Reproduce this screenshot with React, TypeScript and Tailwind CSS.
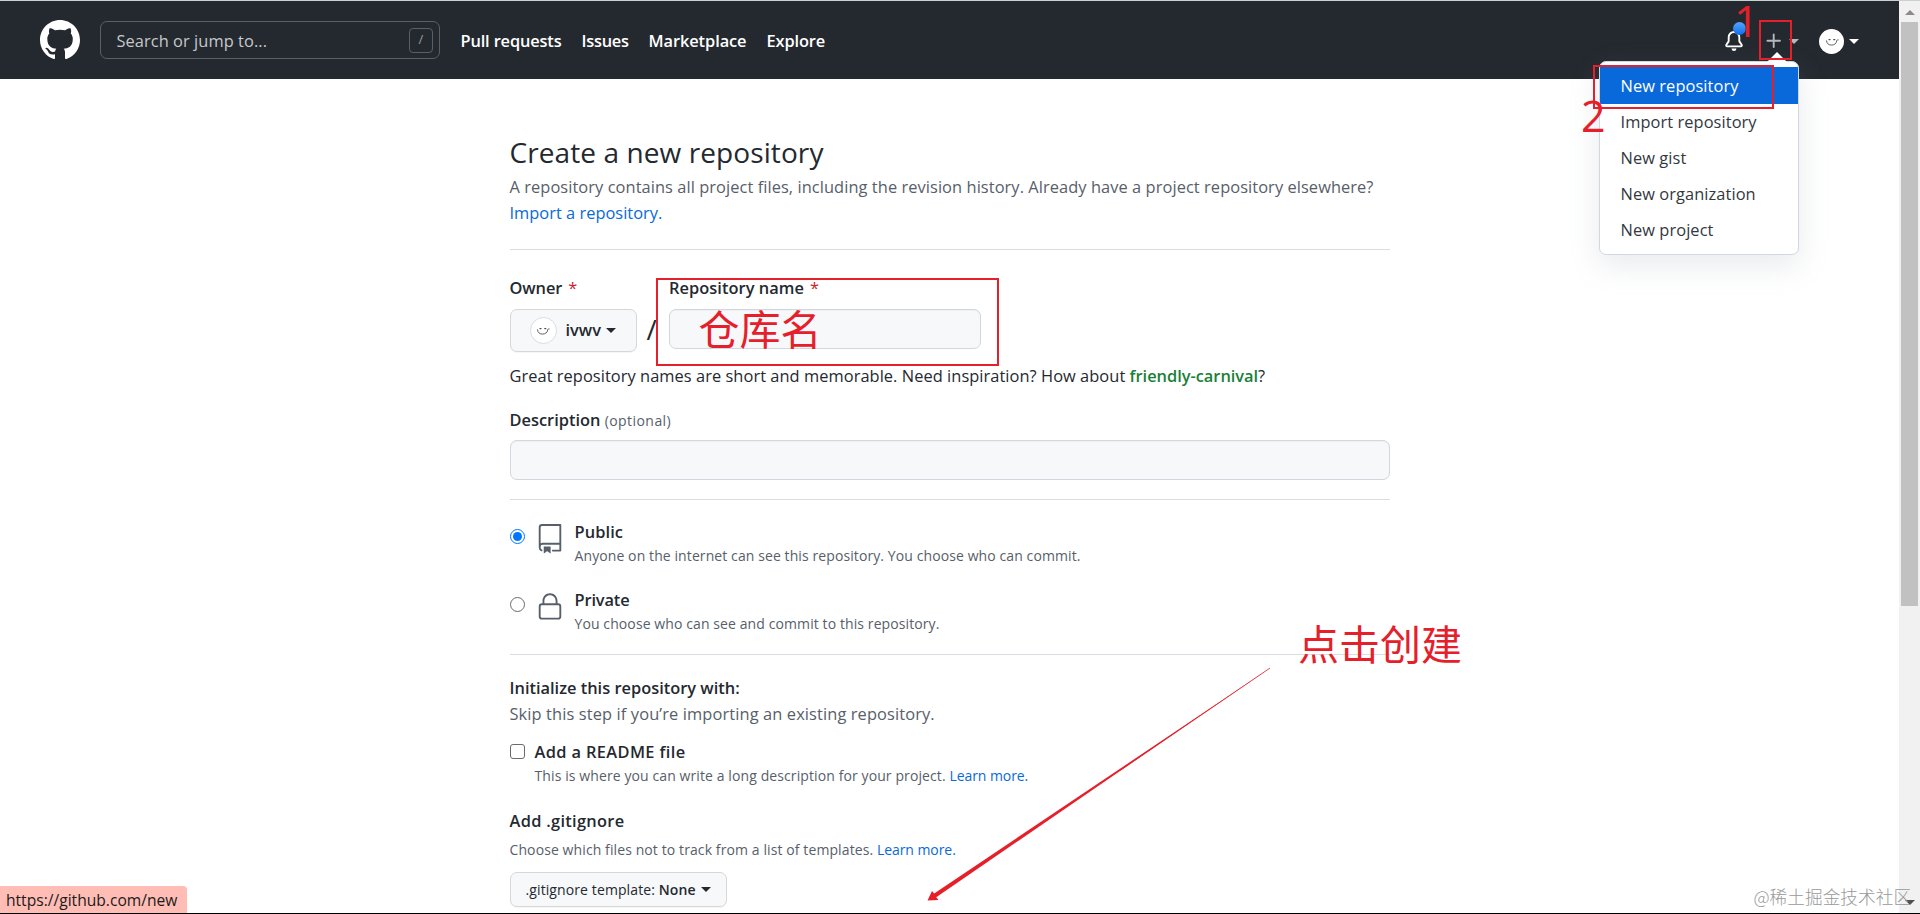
import clsx from "clsx";

const navItems = [
  { label: "Pull requests", className: "w-[101px] tracking-[-0.147px]" },
  { label: "Issues", className: "w-[47px] tracking-[-0.25px]" },
  { label: "Marketplace", className: "w-[98px] tracking-[-0.08px]" },
  { label: "Explore", className: "w-[59px] tracking-[-0.14px]" },
];

const menuItems = [
  "New repository",
  "Import repository",
  "New gist",
  "New organization",
  "New project",
];

function Caret({ className }: { className?: string }) {
  return (
    <span
      className={clsx(
        "block h-0 w-0 border-x-[5px] border-t-[5px] border-x-transparent",
        className
      )}
    />
  );
}

function GitHubMark() {
  return (
    <svg width="40" height="40" viewBox="0 0 16 16" fill="white">
      <path
        fillRule="evenodd"
        d="M8 0C3.58 0 0 3.58 0 8c0 3.54 2.29 6.53 5.47 7.59.4.07.55-.17.55-.38 0-.19-.01-.82-.01-1.49-2.01.37-2.53-.49-2.69-.94-.09-.23-.48-.94-.82-1.13-.28-.15-.68-.52-.01-.53.63-.01 1.08.58 1.23.82.72 1.21 1.87.87 2.33.66.07-.52.28-.87.51-1.07-1.78-.2-3.64-.89-3.64-3.95 0-.87.31-1.59.82-2.15-.08-.2-.36-1.02.08-2.12 0 0 .67-.21 2.2.82.64-.18 1.32-.27 2-.27.68 0 1.36.09 2 .27 1.53-1.04 2.2-.82 2.2-.82.44 1.1.16 1.92.08 2.12.51.56.82 1.27.82 2.15 0 3.07-1.87 3.75-3.65 3.95.29.25.54.73.54 1.48 0 1.07-.01 1.93-.01 2.2 0 .21.15.46.55.38A8.013 8.013 0 0016 8c0-4.42-3.58-8-8-8z"
      />
    </svg>
  );
}

function BellIcon() {
  return (
    <svg width="20" height="20" viewBox="0 0 16 16" fill="white">
      <path d="M8 16a2 2 0 001.985-1.75c.017-.137-.097-.25-.235-.25h-3.5c-.138 0-.252.113-.235.25A2 2 0 008 16z" />
      <path
        fillRule="evenodd"
        d="M8 1.5A3.5 3.5 0 004.5 5v2.947c0 .346-.102.683-.294.97l-1.703 2.556a.018.018 0 00-.003.01l.001.006c0 .002.002.004.004.006a.017.017 0 00.006.004l.007.001h10.964l.007-.001a.016.016 0 00.006-.004.016.016 0 00.004-.006l.001-.007a.017.017 0 00-.003-.01l-1.703-2.554a1.75 1.75 0 01-.294-.97V5A3.5 3.5 0 008 1.5zM3 5a5 5 0 0110 0v2.947c0 .05.015.098.042.139l1.703 2.555A1.518 1.518 0 0113.482 13H2.518a1.518 1.518 0 01-1.263-2.36l1.703-2.554A.25.25 0 003 7.947V5z"
      />
    </svg>
  );
}

function PlusIcon() {
  return (
    <svg width="20" height="20" viewBox="0 0 16 16" fill="#b5b9bb">
      <path d="M7.75 2a.75.75 0 01.75.75V7h4.25a.75.75 0 110 1.5H8.5v4.25a.75.75 0 11-1.5 0V8.5H2.75a.75.75 0 010-1.5H7V2.75A.75.75 0 017.75 2z" />
    </svg>
  );
}

function RepoIcon() {
  return (
    <svg width="30" height="30" viewBox="0 0 24 24" fill="#57606a">
      <path
        fillRule="evenodd"
        d="M3 2.75A2.75 2.75 0 015.75 0h14.5a.75.75 0 01.75.75v20.5a.75.75 0 01-.75.75h-6a.75.75 0 010-1.5h5.25v-4H6A1.5 1.5 0 004.5 18v.75c0 .716.43 1.334 1.05 1.605a.75.75 0 01-.6 1.374A3.25 3.25 0 013 18.75v-16zM19.5 1.5V15H6c-.546 0-1.059.146-1.5.401V2.75c0-.69.56-1.25 1.25-1.25H19.5z"
      />
      <path d="M7 18.25a.25.25 0 01.25-.25h5a.25.25 0 01.25.25v5.01a.25.25 0 01-.397.201l-2.206-1.604a.25.25 0 00-.294 0L7.397 23.46a.25.25 0 01-.397-.2v-5.01z" />
    </svg>
  );
}

function LockIcon() {
  return (
    <svg width="30" height="30" viewBox="0 0 24 24" fill="#57606a">
      <path
        fillRule="evenodd"
        d="M6 9V7.25C6 3.845 8.503 1 12 1s6 2.845 6 6.25V9h.5a2.5 2.5 0 012.5 2.5v8a2.5 2.5 0 01-2.5 2.5h-13A2.5 2.5 0 013 19.5v-8A2.5 2.5 0 015.5 9H6zm1.5-1.75C7.5 4.58 9.422 2.5 12 2.5c2.578 0 4.5 2.08 4.5 4.75V9h-9V7.25zm-3 4.25a1 1 0 011-1h13a1 1 0 011 1v8a1 1 0 01-1 1h-13a1 1 0 01-1-1v-8z"
      />
    </svg>
  );
}

function Avatar({ className }: { className?: string }) {
  return (
    <span
      className={clsx(
        "flex items-center justify-center rounded-full bg-white",
        className
      )}
    >
      <svg
        width="14"
        height="9"
        viewBox="0 0 14 9"
        fill="none"
        stroke="#4b5055"
        strokeWidth="0.9"
        strokeLinecap="round"
      >
        <path d="M1.500 3.800c0 2.600 2.200 4.300 5 4.300s5-1.600 5.200-4.100c.1-.9.700-1.400 1.500-1.200" />
        <path d="M4 2.600h1M8.800 2.600h1" strokeWidth="1.3" />
      </svg>
    </span>
  );
}

function Header() {
  return (
    <header className="flex h-[78px] items-center bg-[#24292f] pl-10 text-[16.4px] text-white">
      <GitHubMark />
      <div className="ml-5 flex h-[38px] w-[340px] items-center justify-between rounded-[7px] border border-[#57606a] pr-1.5 pl-[15.5px]">
        <span className="pt-0.5 tracking-[0.063px] text-[#c6c8ca]">
          Search or jump to...
        </span>
        <span className="flex h-[25px] w-6 items-center justify-center rounded-[4px] border border-[#57606a] text-[13px] text-[#9a9ea2]">
          /
        </span>
      </div>
      <nav className="ml-[20.5px] flex gap-5 pt-0.5 font-semibold whitespace-nowrap">
        {navItems.map((item) => (
          <a key={item.label} className={item.className}>
            {item.label}
          </a>
        ))}
      </nav>
      <div className="mr-[40px] ml-auto flex items-center pt-[2px]">
        <div className="relative">
          <BellIcon />
          <span className="absolute -top-[9px] left-[9px] h-[13px] w-[13px] rounded-full bg-linear-to-b from-[#54a3ff] to-[#006eed]" />
        </div>
        <div className="ml-5 flex items-center">
          <PlusIcon />
          <Caret className="ml-[5px] border-t-[#b5b9bb]" />
        </div>
        <div className="ml-[20px] flex items-center">
          <Avatar className="h-[25px] w-[25px]" />
          <Caret className="ml-[5px] border-t-white" />
        </div>
      </div>
    </header>
  );
}

function CreateMenu() {
  return (
    <div className="absolute top-[61px] left-[1599px] h-[194px] w-[200px] rounded-[7px] border border-[#d0d7de] bg-white pt-[5px] shadow-[0_10px_30px_rgba(140,149,159,0.2)]">
      <span className="absolute -top-[10px] left-[167px] h-0 w-0 border-x-[10px] border-b-[10px] border-x-transparent border-b-white" />
      <ul className="text-[16.4px] tracking-[0.08px] text-[#32383f]">
        {menuItems.map((item, index) => (
          <li
            key={item}
            className={clsx(
              "pl-[20.5px]",
              index === 0
                ? "h-[37px] bg-[#0969da] leading-[38px] text-white"
                : "h-9 leading-[36px]"
            )}
          >
            {item}
          </li>
        ))}
      </ul>
    </div>
  );
}

function Required() {
  return <span className="ml-1.5 text-[#cf222e] font-normal">*</span>;
}

function NewRepositoryForm() {
  return (
    <main className="ml-[509.5px] w-[880.5px] pt-[52px] text-[16.4px] leading-[26px] text-[#24292f]">
      <h1 className="text-[28px] leading-[42px] tracking-[0.092px]">
        Create a new repository
      </h1>
      <p className="mt-px tracking-[0.073px] whitespace-nowrap text-[#57606a]">
        A repository contains all project files, including the revision history.
        Already have a project repository elsewhere?
      </p>
      <a className="block tracking-[0.02px] text-[#0969da]">
        Import a repository.
      </a>
      <hr className="mt-[23px] border-[#d8dee4]" />

      <div className="mt-[25px] flex">
        <div className="w-[127px]">
          <p className="font-semibold tracking-[-0.1px]">
            Owner
            <Required />
          </p>
          <button className="mt-2 flex h-[43px] w-full items-center rounded-[7px] border border-[#d5d8da] bg-[#f6f8fa] pl-[19px] shadow-[0_1px_0_rgba(27,31,36,0.04)]">
            <Avatar className="h-[27px] w-[27px] border border-[#d8dee4]" />
            <span className="-mt-px ml-[9px] font-semibold">ivwv</span>
            <Caret className="ml-[5px] border-t-[#24292f]" />
          </button>
        </div>
        <span className="mt-[38px] w-[32.5px] pl-[10px] text-[28px] leading-[32px]">
          /
        </span>
        <div className="w-[312px]">
          <p className="font-semibold tracking-[0.049px] whitespace-nowrap">
            Repository name
            <Required />
          </p>
          <div className="mt-2 h-10 rounded-[7px] border border-[#d0d7de] bg-[#f6f8fa] shadow-[inset_0_1px_0_rgba(208,215,222,0.2)]" />
        </div>
      </div>
      <p className="mt-[11px] tracking-[0.055px] whitespace-nowrap">
        Great repository names are short and memorable. Need inspiration? How
        about{" "}
        <span className="font-semibold tracking-[-0.017px] text-[#1a7f37]">
          friendly-carnival
        </span>
        ?
      </p>

      <p className="mt-[18px] font-semibold">
        Description{" "}
        <span className="text-[14px] leading-none font-medium tracking-[0.44px] text-[#57606a]">
          (optional)
        </span>
      </p>
      <div className="mt-[7px] h-10 rounded-[7px] border border-[#d0d7de] bg-[#f6f8fa] shadow-[inset_0_1px_0_rgba(208,215,222,0.2)]" />
      <hr className="mt-[19px] border-[#d8dee4]" />

      <div className="mt-[19px] flex h-[49px]">
        <span className="mt-[10px] flex h-[15px] w-[15px] items-center justify-center rounded-full border-[1.5px] border-[#0075ff]">
          <span className="h-[9px] w-[9px] rounded-full bg-[#0075ff]" />
        </span>
        <span className="mt-[5px] ml-[10px]">
          <RepoIcon />
        </span>
        <div className="ml-[10px]">
          <p className="font-semibold tracking-[0.1px]">Public</p>
          <p className="text-[14px] leading-[22px] tracking-[0.094px] text-[#57606a]">
            Anyone on the internet can see this repository. You choose who can
            commit.
          </p>
        </div>
      </div>
      <div className="mt-[19px] flex h-[49px]">
        <span className="mt-[10px] h-[15px] w-[15px] rounded-full border border-[#6b6b6b]" />
        <span className="mt-[5px] ml-[10px]">
          <LockIcon />
        </span>
        <div className="ml-[10px]">
          <p className="font-semibold tracking-[-0.13px]">Private</p>
          <p className="text-[14px] leading-[22px] tracking-[0.097px] text-[#57606a]">
            You choose who can see and commit to this repository.
          </p>
        </div>
      </div>
      <hr className="mt-[18px] border-[#d8dee4]" />

      <p className="mt-5 font-semibold">Initialize this repository with:</p>
      <p className="tracking-[0.12px] text-[#57606a]">
        Skip this step if you’re importing an existing repository.
      </p>
      <div className="mt-3 flex h-[49px]">
        <span className="mt-[5px] h-[15px] w-[15px] rounded-[3px] border border-[#6b6b6b]" />
        <div className="ml-[10px]">
          <p className="font-semibold tracking-[0.367px]">Add a README file</p>
          <p className="text-[14px] leading-[22px] tracking-[0.1px] text-[#57606a]">
            This is where you can write a long description for your project.{" "}
            <a className="tracking-[-0.07px] text-[#0969da]">Learn more.</a>
          </p>
        </div>
      </div>

      <p className="mt-[20px] font-semibold tracking-[0.306px]">Add .gitignore</p>
      <p className="mt-[5px] text-[14px] leading-[22px] tracking-[0.1px] text-[#57606a]">
        Choose which files not to track from a list of templates.{" "}
        <a className="tracking-[-0.07px] text-[#0969da]">Learn more.</a>
      </p>
      <button className="mt-[11px] flex h-[35px] w-[217px] items-center rounded-[7px] border border-[#d5d8da] bg-[#f6f8fa] pl-[15px] text-[14px] tracking-[0.105px] whitespace-pre shadow-[0_1px_0_rgba(27,31,36,0.04)]">
        .gitignore template: <span className="font-semibold">None</span>
        <Caret className="ml-[5px] border-t-[#24292f]" />
      </button>
    </main>
  );
}

function Scrollbar() {
  return (
    <div className="flex w-[21px] flex-col items-center bg-[#f1f1f1] pt-[9px] pb-2">
      <span className="h-0 w-0 border-x-[5px] border-b-[5px] border-x-transparent border-b-[#8b8b8b]" />
      <span className="mt-[7px] h-[584px] w-[17px] bg-[#c1c1c1]" />
      <Caret className="mt-auto border-t-[#505050]" />
    </div>
  );
}

// Red tutorial marks drawn over the page
function Annotations() {
  return (
    <div className="pointer-events-none absolute inset-0 font-['Noto_Sans_CJK_SC',sans-serif] text-[41px] leading-[41px] whitespace-nowrap text-[#e5202b]">
      <div className="absolute top-5 left-[1759px] h-10 w-[33px] border-2" />
      <div className="absolute top-[65px] left-[1593px] h-11 w-[181px] border-2" />
      <div className="absolute top-[278px] left-[656px] h-[88px] w-[343px] border-2" />
      <span className="absolute top-0 left-[1734px] font-['Open_Sans',sans-serif] text-[43px] font-medium">
        1
      </span>
      <span className="absolute top-[95px] left-[1581px] font-['Open_Sans',sans-serif] text-[43px] font-medium">
        2
      </span>
      <span className="absolute top-[307px] left-[698.5px]">仓库名</span>
      <span className="absolute top-[622px] left-[1298px]">点击创建</span>
      <svg className="absolute top-0 left-0" width="1920" height="914">
        <path
          d="M1270 668L936.200 897.300L938.500 900L927.500 900.500L932 891L934.200 893.500Z"
          fill="#e5202b"
        />
        <path d="M1270 668L1120 770.500" stroke="#e5202b" strokeWidth="0.8" />
      </svg>
    </div>
  );
}

export default function App() {
  return (
    <div className="relative flex h-[914px] w-[1920px] overflow-hidden border-t border-b border-t-[#c9d1d3] border-b-black bg-white font-['Open_Sans',sans-serif]">
      <div className="w-[1899px]">
        <Header />
        <NewRepositoryForm />
      </div>
      <Scrollbar />
      <div className="absolute -top-px left-0 h-[914px] w-[1920px]">
        <CreateMenu />
        <Annotations />
        <span className="absolute bottom-0 left-0 h-7 w-[187px] rounded-tr-[4px] bg-[#ffbdb5] pl-1.5 text-[15.6px] leading-[28px] text-[#1b1b1b]">
          https://github.com/new
        </span>
        <span className="absolute top-[882px] left-[1753.5px] font-['Noto_Sans_CJK_SC',sans-serif] text-[17.7px] leading-7 font-light text-[#999999]">
          @稀土掘金技术社区
        </span>
      </div>
    </div>
  );
}
